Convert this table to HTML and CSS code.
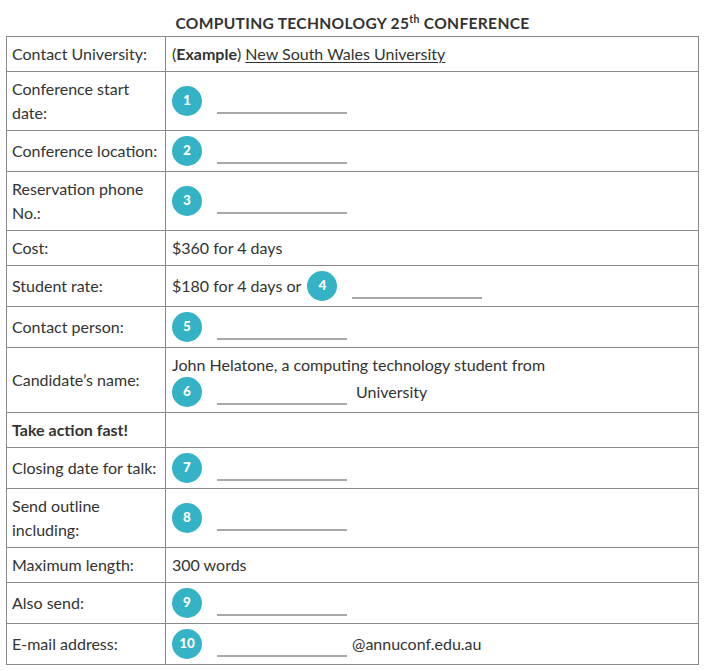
FILE: index.html
```html
<!DOCTYPE html>
<html>
<head>
<meta charset="utf-8">
<link rel="stylesheet" href="styles.css">
</head>
<body>
<div class="page">
  <h1 class="title">COMPUTING TECHNOLOGY 25<sup>th</sup> CONFERENCE</h1>
  <table class="form">
    <tr><td class="label">Contact University:</td><td class="value">(<b>Example</b>) <span class="ul">New South Wales University</span></td></tr>
    <tr><td class="label">Conference start date:</td><td class="value"><div class="gap"><span class="num">1</span><span class="blank"></span></div></td></tr>
    <tr><td class="label">Conference location:</td><td class="value"><div class="gap"><span class="num">2</span><span class="blank"></span></div></td></tr>
    <tr><td class="label">Reservation phone No.:</td><td class="value"><div class="gap"><span class="num">3</span><span class="blank"></span></div></td></tr>
    <tr><td class="label">Cost:</td><td class="value">$360 for 4 days</td></tr>
    <tr><td class="label">Student rate:</td><td class="value"><div class="gap"><span class="txt">$180 for 4 days or</span><span class="num">4</span><span class="blank"></span></div></td></tr>
    <tr><td class="label">Contact person:</td><td class="value"><div class="gap"><span class="num">5</span><span class="blank"></span></div></td></tr>
    <tr><td class="label">Candidate’s name:</td><td class="value"><div class="line">John Helatone, a computing technology student from</div><div class="gap"><span class="num">6</span><span class="blank"></span><span class="after">University</span></div></td></tr>
    <tr><td class="label"><b>Take action fast!</b></td><td class="value"></td></tr>
    <tr><td class="label">Closing date for talk:</td><td class="value"><div class="gap"><span class="num">7</span><span class="blank"></span></div></td></tr>
    <tr><td class="label">Send outline including:</td><td class="value"><div class="gap"><span class="num">8</span><span class="blank"></span></div></td></tr>
    <tr><td class="label">Maximum length:</td><td class="value">300 words</td></tr>
    <tr><td class="label">Also send:</td><td class="value"><div class="gap"><span class="num">9</span><span class="blank"></span></div></td></tr>
    <tr><td class="label">E-mail address:</td><td class="value"><div class="gap"><span class="num">10</span><span class="blank"></span><span class="after at">@annuconf.edu.au</span></div></td></tr>
  </table>
</div>
</body>
</html>
```
FILE: styles.css
```css
html, body {
  margin: 0;
  padding: 0;
  background: #ffffff;
}
body {
  font-family: "Lato", "Open Sans", sans-serif;
  font-size: 16px;
  color: #333333;
}
.page {
  padding: 0 9px 0 6px;
}
.title {
  margin: 0;
  height: 36px;
  box-sizing: border-box;
  padding-top: 14px;
  text-align: center;
  font-size: 15.6px;
  font-weight: 700;
  line-height: 18px;
  letter-spacing: 0.3px;
  color: #333333;
}
.title sup {
  font-size: 10.5px;
  line-height: 0;
  vertical-align: 6px;
}
.form {
  width: 100%;
  border-collapse: collapse;
  table-layout: fixed;
}
.form td {
  border: 1px solid #8a8a8a;
  padding: 5px 6px;
  line-height: 24px;
  vertical-align: middle;
}
.form td.label {
  width: 147px;
  padding-left: 5px;
}
.ul {
  text-decoration: underline;
  text-underline-offset: 2px;
}
.gap {
  display: flex;
  align-items: center;
}
.num {
  flex: none;
  width: 30px;
  height: 30px;
  border-radius: 50%;
  background: #34b2c6;
  color: #ffffff;
  font-size: 13.5px;
  font-weight: 900;
  display: flex;
  align-items: center;
  justify-content: center;
  line-height: 1;
}
.txt {
  margin-right: 6px;
}
.blank {
  flex: none;
  width: 130px;
  height: 2px;
  background: #a8a8a8;
  margin-left: 15px;
  align-self: flex-end;
  margin-bottom: 2px;
}
.after {
  margin-left: 9px;
}
.at {
  margin-left: 5px;
}
```
